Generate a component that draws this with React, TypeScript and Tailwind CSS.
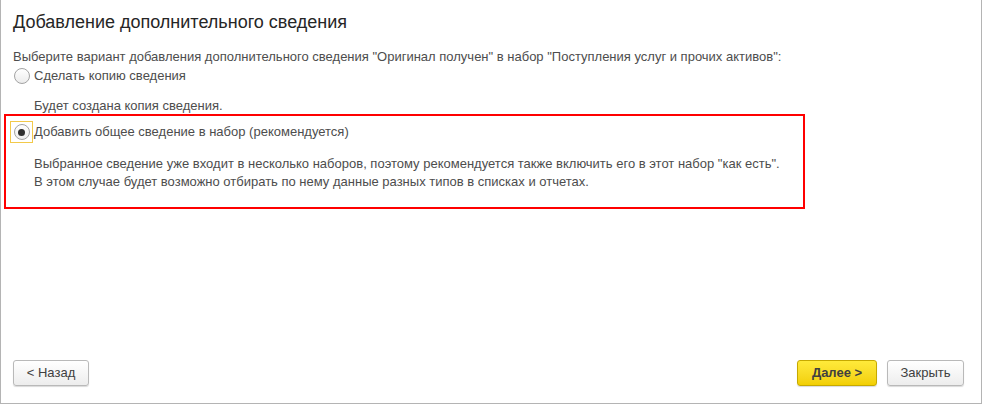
const Radio = ({ checked, focused }: { checked?: boolean; focused?: boolean }) => (
  <div
    className={`w-[23px] h-[22px] flex items-center justify-center shrink-0 ${
      focused ? "border border-[#f2c94a]" : ""
    }`}
  >
    <div className="w-[16px] h-[16px] rounded-full border border-[#a3a3a3] bg-gradient-to-b from-white to-[#ececec] flex items-center justify-center">
      {checked && <div className="w-[7px] h-[7px] rounded-full bg-[#2e2e2e]" />}
    </div>
  </div>
);

const Button = ({
  children,
  primary,
  className = "",
}: {
  children: React.ReactNode;
  primary?: boolean;
  className?: string;
}) => (
  <button
    className={`h-[26px] rounded-[3px] border text-[13px] shadow-[0_1px_1px_rgba(0,0,0,0.15)] ${
      primary
        ? "border-[#c6a900] bg-gradient-to-b from-[#ffea3a] to-[#f2cf00] font-bold text-[#404040]"
        : "border-[#b9b9b9] bg-gradient-to-b from-white to-[#ededed] text-[#404040]"
    } ${className}`}
  >
    {children}
  </button>
);

const App = () => {
  return (
    <div className="w-[983px] h-[406px] bg-white font-['Liberation_Sans',Arial,sans-serif]">
      <div className="w-[982px] h-[404px] border-l border-r border-b border-[#b4b4b4] flex flex-col">
        <div className="pl-[12px] flex flex-col">
          <h1 className="mt-[11px] text-[18px] leading-[22px] text-[#262626]">
            Добавление дополнительного сведения
          </h1>
          <p className="mt-[16px] text-[13px] leading-[16px] text-[#4d4d4d]">
            Выберите вариант добавления дополнительного сведения "Оригинал получен" в набор "Поступления услуг и
            прочих активов":
          </p>
          <div className="-ml-[3px] flex items-center h-[22px] text-[13px] text-[#4d4d4d]">
            <Radio />
            <span className="ml-[1px]">Сделать копию сведения</span>
          </div>
          <p className="mt-[11px] pl-[21px] text-[13px] leading-[16px] text-[#4d4d4d]">
            Будет создана копия сведения.
          </p>
          <div className="-ml-[9px] w-[801px] border-2 border-[#ff0000] pl-[4px] pt-[5px] pb-[16px]">
            <div className="flex items-center h-[22px] text-[13px] text-[#4d4d4d]">
              <Radio checked focused />
              <span className="ml-[1px]">Добавить общее сведение в набор (рекомендуется)</span>
            </div>
            <p className="mt-[12px] pl-[24px] text-[13px] leading-[18px] text-[#4d4d4d]">
              Выбранное сведение уже входит в несколько наборов, поэтому рекомендуется также включить его в этот
              набор "как есть".
              <br />
              В этом случае будет возможно отбирать по нему данные разных типов в списках и отчетах.
            </p>
          </div>
        </div>
        <div className="flex-1" />
        <div className="flex items-center pl-[12px] pr-[17px] pb-[17px]">
          <Button className="w-[76px]">&lt; Назад</Button>
          <div className="flex-1" />
          <Button primary className="w-[80px]">
            Далее &gt;
          </Button>
          <Button className="w-[77px] ml-[10px]">Закрыть</Button>
        </div>
      </div>
    </div>
  );
};

export default App;
